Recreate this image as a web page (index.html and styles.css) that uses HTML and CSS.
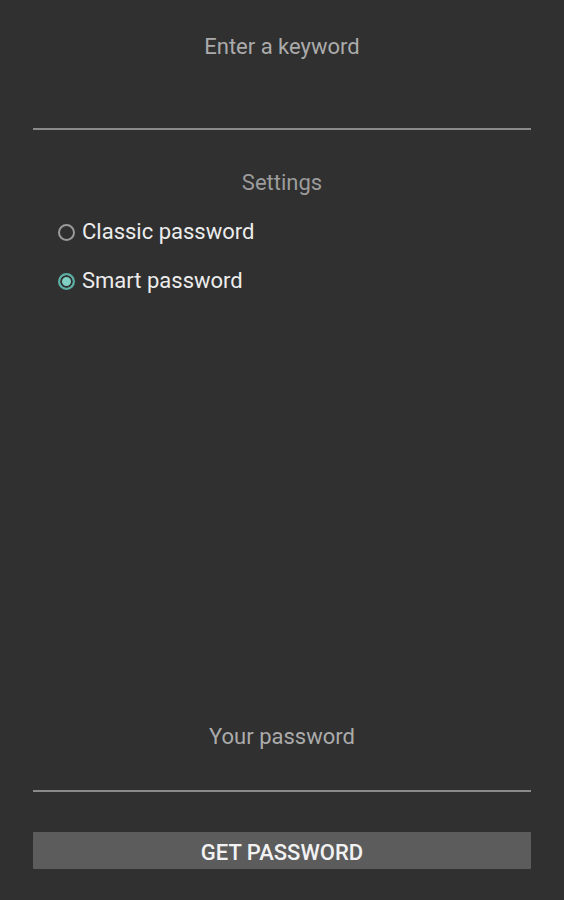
FILE: index.html
```html
<!DOCTYPE html>
<html lang="en">
<head>
    <meta charset="UTF-8">
    <meta name="viewport" content="width=device-width, initial-scale=1.0">
    <link rel="stylesheet" href="styles.css">
    <title>Password</title>
</head>
<body>
    <form class="pantalla" action="#" method="post">
        <!-- Palabra clave -->
        <input type="text" name="keyword" class="campo campoKeyword" placeholder="Enter a keyword">

        <div class="ajustes">Settings</div>

        <label class="opcion">
            <input type="radio" name="tipo" value="classic">
            <span class="radio"></span>
            <span class="textoOpcion">Classic password</span>
        </label>
        <label class="opcion">
            <input type="radio" name="tipo" value="smart" checked>
            <span class="radio"></span>
            <span class="textoOpcion">Smart password</span>
        </label>

        <div class="espacio"></div>

        <!-- Resultado -->
        <input type="text" name="password" class="campo campoResultado" placeholder="Your password" readonly>

        <button type="button" class="obtener">GET PASSWORD</button>
    </form>
</body>
</html>
```

FILE: styles.css
```css
html, body {
    margin: 0;
    height: 100%;
}

body {
    background-color: #303030;
    font-family: Roboto, "Noto Sans", Arial, sans-serif;
}

.pantalla {
    display: flex;
    flex-direction: column;
    box-sizing: border-box;
    min-height: 100%;
    padding: 0 33px 31px;
}

.campo {
    display: block;
    box-sizing: border-box;
    width: 100%;
    margin: 0;
    background: transparent;
    border: none;
    border-bottom: 2px solid #8a8a8a;
    outline: none;
    color: #eeeeee;
    font-family: inherit;
    font-size: 22px;
    line-height: 26px;
    text-align: center;
}

.campo::placeholder {
    color: #ababab;
}

.campoKeyword {
    height: 130px;
    padding: 33px 0 69px;
}

.campoResultado {
    height: 79px;
    padding: 10px 0 41px;
}

.ajustes {
    margin-top: 40px;
    color: #9c9c9c;
    font-size: 22px;
    line-height: 26px;
    text-align: center;
}

.opcion {
    display: flex;
    align-items: center;
    margin-top: 23px;
    padding-left: 25px;
    line-height: 26px;
    cursor: pointer;
}

.opcion input {
    display: none;
}

.radio {
    box-sizing: border-box;
    width: 17px;
    height: 17px;
    margin-right: 7px;
    border: 2px solid #9a9a9a;
    border-radius: 50%;
}

.opcion input:checked + .radio {
    border-color: #5aaea3;
    background-color: #7fd0c3;
    box-shadow: inset 0 0 0 2px #303030;
}

.textoOpcion {
    color: #ececec;
    font-size: 22px;
}

.espacio {
    flex: 1;
}

.obtener {
    display: block;
    width: 100%;
    height: 37px;
    margin-top: 40px;
    padding: 3px 0 0;
    background-color: #5c5c5c;
    border: none;
    border-radius: 1px;
    color: #f2f2f2;
    font-family: inherit;
    font-size: 22px;
    font-weight: 500;
    cursor: pointer;
}
```
